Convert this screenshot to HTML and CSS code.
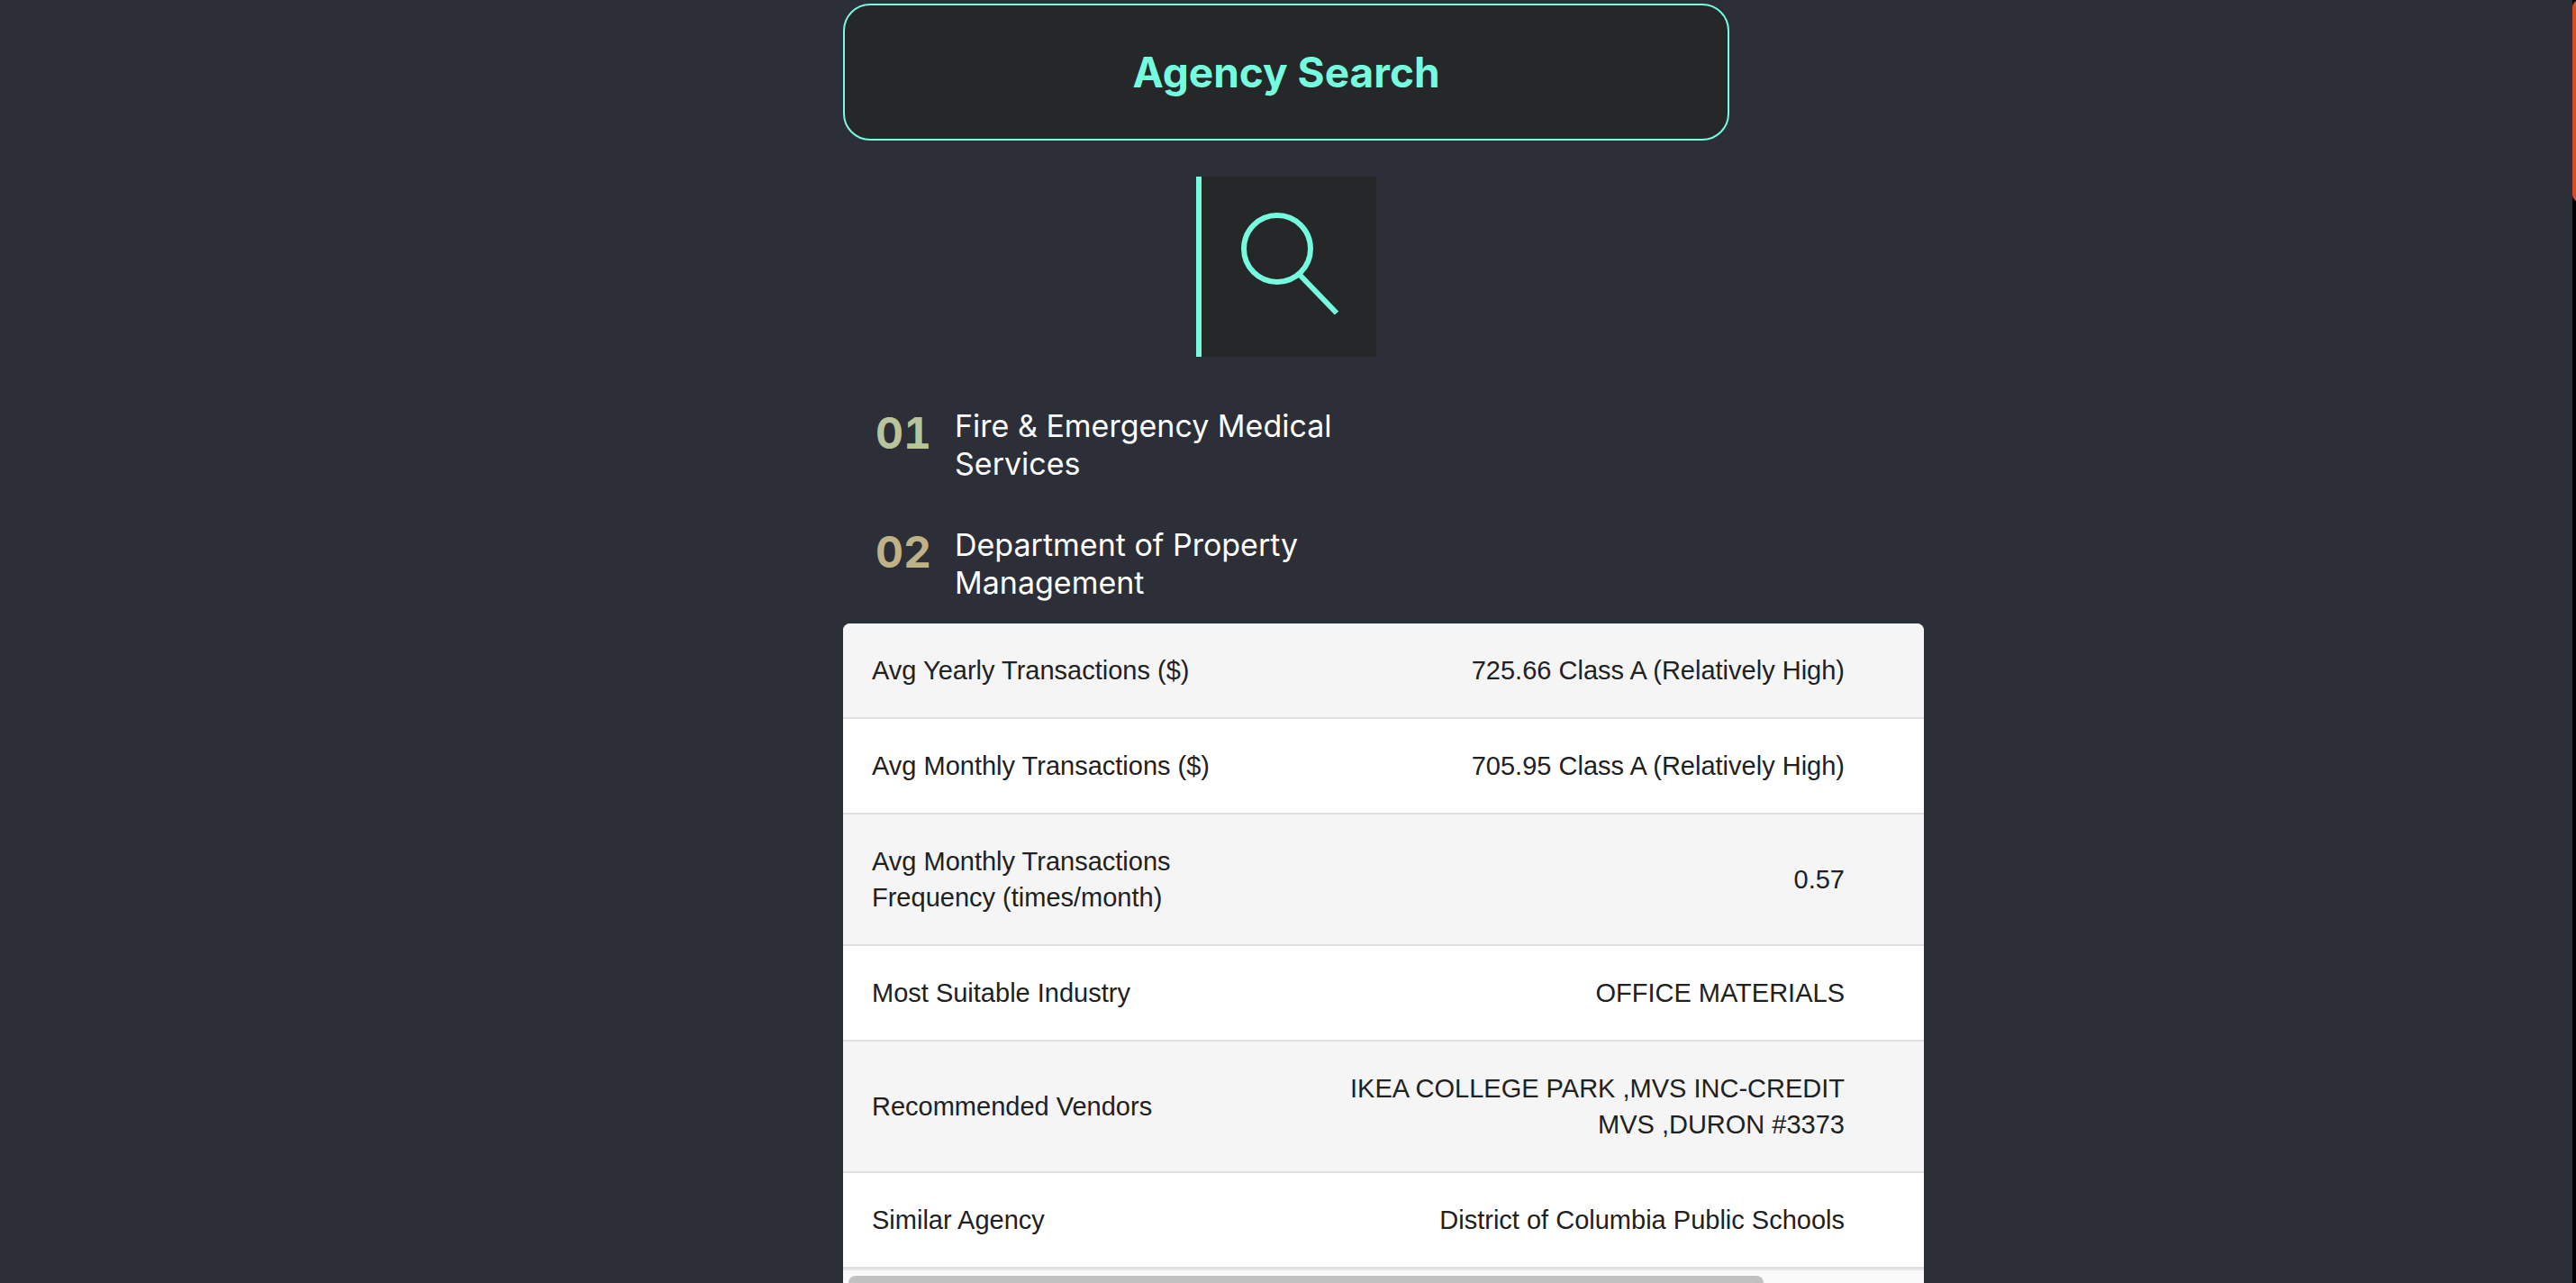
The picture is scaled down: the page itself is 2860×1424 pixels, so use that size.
FILE: index.html
```html
<!DOCTYPE html>
<html lang="en">
<head>
<meta charset="utf-8">
<title>Agency Search</title>
<link rel="stylesheet" href="styles.css">
</head>
<body>
<div class="shell">
  <main class="content">
    <div class="column">
      <header class="banner"><h1 class="title">Agency Search</h1></header>
      <button class="search" type="button" aria-label="Search agencies">
        <svg class="search-icon" viewBox="0 0 194 200" fill="none" stroke="currentColor" stroke-width="6" aria-hidden="true">
          <circle cx="84" cy="80" r="37"/>
          <path d="M109 109L150 151.500"/>
        </svg>
      </button>
      <ol class="agencies">
        <li class="agency">
          <span class="rank rank-green">01</span>
          <span class="name">Fire &amp; Emergency Medical Services</span>
        </li>
        <li class="agency">
          <span class="rank rank-gold">02</span>
          <span class="name">Department of Property Management</span>
        </li>
      </ol>
      <section class="card">
        <table class="facts">
          <tbody>
            <tr><th scope="row">Avg Yearly Transactions ($)</th><td>725.66 Class A (Relatively High)</td></tr>
            <tr><th scope="row">Avg Monthly Transactions ($)</th><td>705.95 Class A (Relatively High)</td></tr>
            <tr><th scope="row">Avg Monthly Transactions Frequency (times/month)</th><td>0.57</td></tr>
            <tr><th scope="row">Most Suitable Industry</th><td>OFFICE MATERIALS</td></tr>
            <tr><th scope="row">Recommended Vendors</th><td>IKEA COLLEGE PARK ,MVS INC-CREDIT MVS ,DURON #3373</td></tr>
            <tr><th scope="row">Similar Agency</th><td>District of Columbia Public Schools</td></tr>
          </tbody>
        </table>
        <div class="track"><div class="track-thumb"></div></div>
      </section>
    </div>
  </main>
  <div class="rail"><div class="rail-thumb"></div></div>
</div>
</body>
</html>
```
FILE: styles.css
```css
* {
  box-sizing: border-box;
}

body {
  margin: 0;
  background: #2c2f38;
  color: #fff;
  font-family: Inter, "Liberation Sans", sans-serif;
}

.shell {
  display: flex;
  height: 100vh;
  overflow: hidden;
}

.content {
  flex: 1;
  display: flex;
  justify-content: center;
  padding-top: 4px;
  overflow: hidden;
}

.column {
  display: flex;
  flex-direction: column;
  align-items: center;
  width: 984px;
}

.banner {
  align-self: stretch;
  padding: 46px 0;
  border: 2px solid #75fbde;
  border-radius: 30px;
  background: #252729;
  text-align: center;
}

.title {
  margin: 0;
  color: #75fbde;
  font-size: 46px;
  line-height: 56px;
  font-weight: 700;
}

.search {
  display: block;
  flex: none;
  width: 200px;
  height: 200px;
  margin: 40px 0;
  padding: 0;
  border: 0;
  border-left: 6px solid #75fbde;
  background: #252729;
  color: #75fbde;
}

.search-icon {
  display: block;
  width: 100%;
}

.agencies {
  align-self: stretch;
  display: flex;
  flex-direction: column;
  gap: 48px;
  margin: 0;
  padding: 16px 36px 24px;
  list-style: none;
}

.agency {
  display: flex;
  gap: 24px;
}

.rank {
  width: 64px;
  font-size: 48px;
  line-height: 58px;
  font-weight: 700;
  font-variant-numeric: tabular-nums;
}

.rank-green {
  color: #b9c49a;
}

.rank-gold {
  color: #c0b288;
}

.name {
  width: 440px;
  font-size: 34px;
  line-height: 42px;
}

.card {
  align-self: flex-start;
  flex: none;
  width: 1200px;
  border-radius: 8px;
  overflow: hidden;
  background: #fafafa;
}

.facts {
  width: 100%;
  table-layout: fixed;
  border-collapse: separate;
  border-spacing: 0;
  color: #212121;
  font-family: "Liberation Sans", sans-serif;
  font-size: 29px;
  line-height: 40px;
}

.facts th,
.facts td {
  padding: 32px;
  border-bottom: 2px solid #e0e0e0;
  background: #fff;
  font-weight: 400;
}

.facts th {
  width: 40%;
  text-align: left;
}

.facts td {
  padding-right: 88px;
  padding-left: 64px;
  text-align: right;
}

.facts tr:nth-child(odd) > * {
  background: #f5f5f5;
}

.track {
  height: 30px;
  padding: 6px;
  border-top: 2px solid #e8e8e8;
}

.track-thumb {
  width: 1016px;
  height: 16px;
  border-radius: 8px;
  background: #c1c1c1;
}

.rail {
  width: 4px;
  overflow: hidden;
  background: #000;
}

.rail-thumb {
  width: 16px;
  height: 224px;
  border-radius: 8px;
  background: #d44d28;
}
```
